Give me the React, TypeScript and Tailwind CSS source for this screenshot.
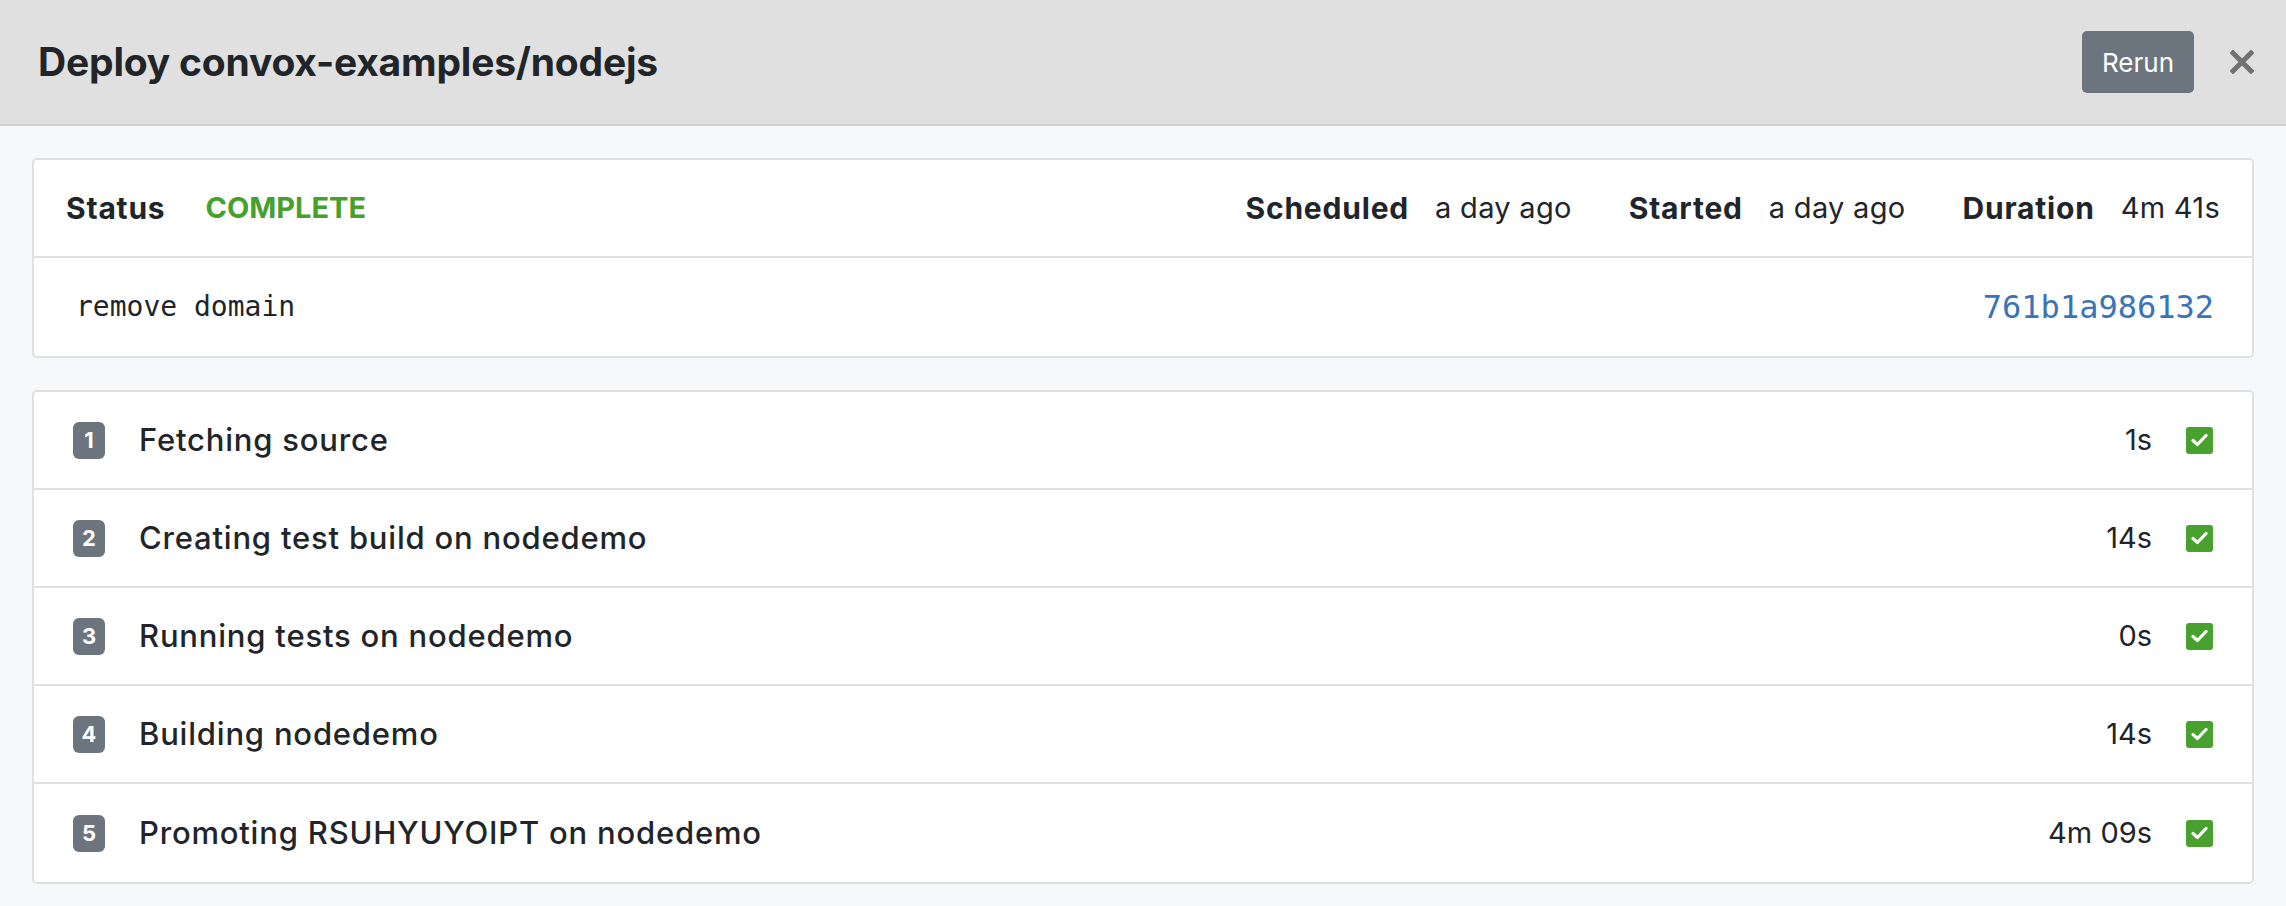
import { Fragment } from "react";

const steps = [
  { n: 1, label: "Fetching source", took: "1s" },
  { n: 2, label: "Creating test build on nodedemo", took: "14s" },
  { n: 3, label: "Running tests on nodedemo", took: "0s" },
  { n: 4, label: "Building nodedemo", took: "14s" },
  { n: 5, label: "Promoting RSUHYUYOIPT on nodedemo", took: "4m 09s" },
];

const meta = [
  { label: "Scheduled", value: "a day ago" },
  { label: "Started", value: "a day ago" },
  { label: "Duration", value: "4m 41s" },
];

function CheckBox() {
  return (
    <span className="flex h-[27px] w-[27px] items-center justify-center rounded-[3px] bg-[#48a02f]">
      <svg width="17" height="14" viewBox="0 0 17 14" fill="none">
        <polyline points="2,7.5 6.5,11.5 15,2.5" stroke="#fff" strokeWidth="3.2" strokeLinecap="round" strokeLinejoin="round" />
      </svg>
    </span>
  );
}

export default function App() {
  return (
    <div className="min-h-screen bg-[#f7f8fa] font-['Inter',sans-serif] text-[#212529]">
      {/* Header */}
      <div className="flex h-[126px] items-center justify-between border-b-2 border-[#cfcfcf] bg-[#e0e0e0] pl-[38px] pr-[32px]">
        <h1 className="text-[39px] font-bold tracking-[-0.2px]">Deploy convox-examples/nodejs</h1>
        <div className="flex items-center">
          <button className="h-[62px] w-[112px] rounded-[5px] bg-[#6c757d] text-[26px] text-white">Rerun</button>
          <svg className="ml-[36px]" width="24" height="24" viewBox="0 0 24 24">
            <path d="M3 3 L21 21 M21 3 L3 21" stroke="#717171" strokeWidth="5" strokeLinecap="square" />
          </svg>
        </div>
      </div>

      <div className="px-[32px] pt-[32px]">
        {/* Summary card */}
        <div className="rounded-[5px] border-2 border-[#e0e0e0] bg-white">
          <div className="flex h-[98px] items-center justify-between border-b-2 border-[#e0e0e0] pl-[32px] pr-[32px]">
            <div className="flex items-center gap-[40px]">
              <span className="text-[30px] font-bold tracking-[0.8px]">Status</span>
              <span className="text-[29px] font-bold text-[#479f2c]">COMPLETE</span>
            </div>
            <div className="flex items-center gap-[57px] text-[29px]">
              {meta.map((m) => (
                <Fragment key={m.label}>
                  <span className="flex items-center gap-[26px]">
                    <span className="text-[30px] font-bold tracking-[0.8px]">{m.label}</span>
                    <span className="tracking-[0.3px]">{m.value}</span>
                  </span>
                </Fragment>
              ))}
            </div>
          </div>
          <div className="flex h-[98px] items-center justify-between pl-[42px] pr-[38px]">
            <code className="font-['DejaVu_Sans_Mono',monospace] text-[28px]">remove domain</code>
            <a className="font-['DejaVu_Sans_Mono',monospace] text-[32px] text-[#3b73b9]">761b1a986132</a>
          </div>
        </div>

        {/* Steps */}
        <div className="mt-[32px] rounded-[5px] border-2 border-[#e0e0e0] bg-white">
          {steps.map((s, i) => (
            <div
              key={s.n}
              className={
                "flex h-[98px] items-center pl-[39px] pr-[39px]" +
                (i < steps.length - 1 ? " border-b-2 border-[#e0e0e0]" : "")
              }
            >
              <span className="flex h-[37px] w-[32px] items-center justify-center rounded-[6px] bg-[#6c757d] text-[22px] font-bold text-white">
                {s.n}
              </span>
              <span className="ml-[34px] flex-1 text-[31px] font-medium tracking-[0.8px]">{s.label}</span>
              <span className="text-[29px]">{s.took}</span>
              <span className="ml-[34px]">
                <CheckBox />
              </span>
            </div>
          ))}
        </div>
      </div>
    </div>
  );
}
